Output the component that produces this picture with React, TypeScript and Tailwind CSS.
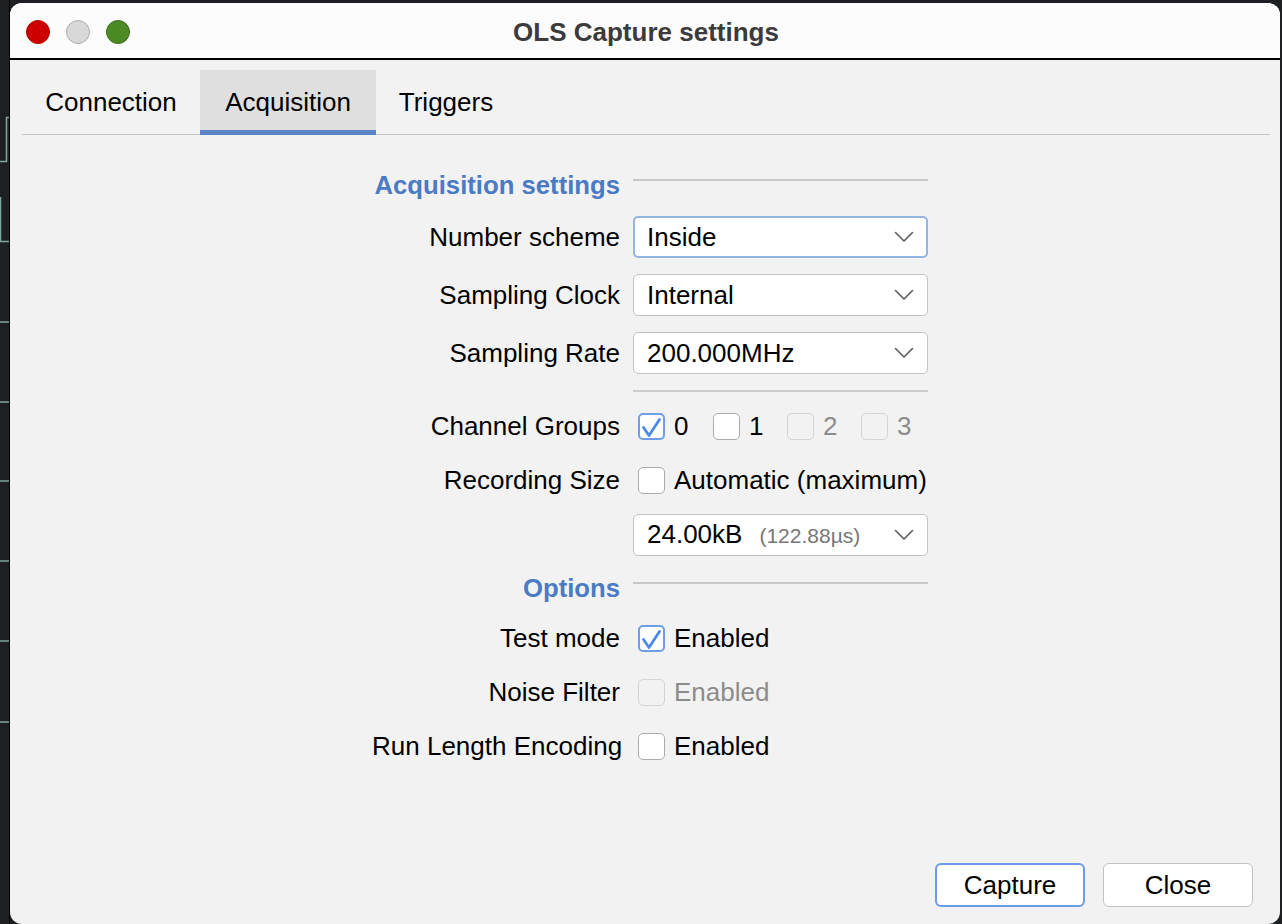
import clsx from 'clsx';
import React from 'react';

const FONT = "font-['Liberation_Sans',Arial,Helvetica,sans-serif]";

function Chevron() {
  return (
    <svg width="20" height="12" viewBox="0 0 20 12" className="shrink-0">
      <path d="M1.5 1.5 L10 10 L18.5 1.5" fill="none" stroke="#5c5c5c" strokeWidth="1.6" strokeLinecap="round" strokeLinejoin="round" />
    </svg>
  );
}

function Combo({ focused, children }: { focused?: boolean; children: React.ReactNode }) {
  return (
    <div
      className={clsx(
        'w-[295px] bg-white rounded-[5px] flex items-center',
        focused ? 'h-[42px] border-2 border-[#94b4e2] pl-[12px] pr-[12px]' : 'h-[42px] border border-[#c4c4c4] pl-[13px] pr-[13px]'
      )}
    >
      <div className="flex-1 flex items-baseline text-[26px] leading-[30px] text-black">{children}</div>
      <Chevron />
    </div>
  );
}

function Check({ checked, disabled, className }: { checked?: boolean; disabled?: boolean; className?: string }) {
  return (
    <span
      className={clsx(
        'relative inline-block w-[27px] h-[27px] shrink-0 rounded-[5px]',
        checked && 'border-2 border-[#6d9ee6] bg-white',
        !checked && !disabled && 'border-[1.5px] border-[#ababab] bg-white',
        disabled && 'border-[1.5px] border-[#d4d4d4]',
        className
      )}
    >
      {checked && (
        <svg viewBox="0 0 27 27" className="absolute -left-[2px] -top-[2px] w-[27px] h-[27px]">
          <path d="M5.5 14.5 L11 22.5 L21.5 6.5" fill="none" stroke="#4c8ae8" strokeWidth="2.8" strokeLinecap="round" strokeLinejoin="round" />
        </svg>
      )}
    </span>
  );
}

function Row({ label, children, className }: { label?: string; children: React.ReactNode; className?: string }) {
  return (
    <div className={clsx('flex items-center gap-[13px] h-[36px]', className)}>
      <div className="w-[248px] text-right text-[26px] leading-[30px] text-black whitespace-nowrap">{label}</div>
      <div className="w-[295px] flex items-center pl-[5px]">{children}</div>
    </div>
  );
}

function Section({ title, className }: { title: string; className?: string }) {
  return (
    <div className={clsx('flex items-start gap-[13px] h-[30px]', className)}>
      <div className="w-[248px] text-right text-[25.7px] leading-[30px] font-bold text-[#4a7bc4] whitespace-nowrap">{title}</div>
      <div className="w-[295px] h-[1.5px] bg-[#c8c8c8] mt-[9px]" />
    </div>
  );
}

function Waves() {
  return (
    <svg width="10" height="924" viewBox="0 0 10 924" className="shrink-0">
      <g fill="none" stroke="#7ea99e" strokeWidth="1.5">
        <path d="M10 117.5 H6.5 V161.5 H0" />
        <path d="M0.5 197 V241.5 H10" />
        <path d="M0 322 H10" />
        <path d="M0 402 H10" />
        <path d="M0 481 H10" />
        <path d="M0 561 H10" />
        <path d="M0 641 H10" />
        <path d="M0 722 H10" />
      </g>
      <path d="M9.5 0 V924" stroke="#000" strokeWidth="1" />
    </svg>
  );
}

export default function App() {
  return (
    <div className={clsx('w-[1282px] h-[924px] bg-[#1e1f22] flex overflow-hidden', FONT)}>
      <Waves />
      <div className="w-[1270px] h-[921px] mt-[3px] rounded-[12px] overflow-hidden bg-[#f2f2f2] flex flex-col">
        {/* title bar */}
        <div className="relative h-[57px] bg-[#fcfcfc] border-b-2 border-black flex items-center justify-center shrink-0">
          <div className="absolute left-[16px] top-[17px] flex gap-[16px]">
            <span className="w-[24px] h-[24px] rounded-full bg-[#cc0000] border border-[#b30000]" />
            <span className="w-[24px] h-[24px] rounded-full bg-[#d8d8d8] border border-[#acacac]" />
            <span className="w-[24px] h-[24px] rounded-full bg-[#4c8a24] border border-[#3b701a]" />
          </div>
          <span className="text-[26px] leading-[30px] font-bold text-[#3b3b3b] ml-[2px] mt-[2px]">OLS Capture settings</span>
        </div>

        {/* tabs */}
        <div className="mt-[10px] ml-[12px] mr-[10px] flex border-b border-[#c4c4c4] h-[65px] shrink-0">
          <div className="w-[178px] h-[64px] flex items-center justify-center text-[26px] text-black">Connection</div>
          <div className="w-[176px] h-[65px] bg-[#dfdfdf] border-b-[5px] border-[#5b84c4] flex items-center justify-center text-[26px] text-black pt-[5px]">
            Acquisition
          </div>
          <div className="w-[140px] h-[64px] flex items-center justify-center text-[26px] text-black">Triggers</div>
        </div>

        {/* form */}
        <div className="ml-[362px] flex flex-col">
          <Section title="Acquisition settings" className="mt-[35px]" />
          <div className="flex items-center gap-[13px] mt-[16px]">
            <div className="w-[248px] text-right text-[26px] leading-[30px] text-black">Number scheme</div>
            <Combo focused>Inside</Combo>
          </div>
          <div className="flex items-center gap-[13px] mt-[16px]">
            <div className="w-[248px] text-right text-[26px] leading-[30px] text-black">Sampling Clock</div>
            <Combo>Internal</Combo>
          </div>
          <div className="flex items-center gap-[13px] mt-[16px]">
            <div className="w-[248px] text-right text-[26px] leading-[30px] text-black">Sampling Rate</div>
            <Combo>200.000MHz</Combo>
          </div>
          <div className="flex gap-[13px] mt-[16px]">
            <div className="w-[248px]" />
            <div className="w-[295px] h-[2px] bg-[#cdcdcd]" />
          </div>

          <Row label="Channel Groups" className="mt-[16px]">
            <div className="flex items-center">
              <Check checked />
              <span className="ml-[9px] w-[39px] text-[26px] leading-[30px]">0</span>
              <Check />
              <span className="ml-[9px] w-[38px] text-[26px] leading-[30px]">1</span>
              <Check disabled />
              <span className="ml-[9px] w-[38px] text-[26px] leading-[30px] text-[#8c8c8c]">2</span>
              <Check disabled />
              <span className="ml-[9px] text-[26px] leading-[30px] text-[#8c8c8c]">3</span>
            </div>
          </Row>
          <Row label="Recording Size" className="mt-[18px]">
            <Check />
            <span className="ml-[9px] text-[26px] leading-[30px] whitespace-nowrap">Automatic (maximum)</span>
          </Row>
          <div className="flex items-center gap-[13px] mt-[16px]">
            <div className="w-[248px]" />
            <Combo>
              <span>24.00kB</span>
              <span className="ml-[17px] text-[21px] text-[#777777]">(122.88µs)</span>
            </Combo>
          </div>

          <Section title="Options" className="mt-[17px]" />
          <Row label="Test mode" className="mt-[17px]">
            <Check checked />
            <span className="ml-[9px] text-[26px] leading-[30px]">Enabled</span>
          </Row>
          <Row label="Noise Filter" className="mt-[18px]">
            <Check disabled />
            <span className="ml-[9px] text-[26px] leading-[30px] text-[#8c8c8c]">Enabled</span>
          </Row>
          <Row label="Run Length Encoding" className="mt-[18px]">
            <Check />
            <span className="ml-[9px] text-[26px] leading-[30px]">Enabled</span>
          </Row>
        </div>

        {/* buttons */}
        <div className="mt-auto mb-[17px] mr-[27px] flex justify-end gap-[18px]">
          <button className="w-[150px] h-[44px] bg-white border-[2.5px] border-[#6c9de4] rounded-[6px] text-[26px] text-black">Capture</button>
          <button className="w-[150px] h-[44px] bg-white border-[1.5px] border-[#c2c2c2] rounded-[6px] text-[26px] text-black">Close</button>
        </div>
      </div>
    </div>
  );
}
